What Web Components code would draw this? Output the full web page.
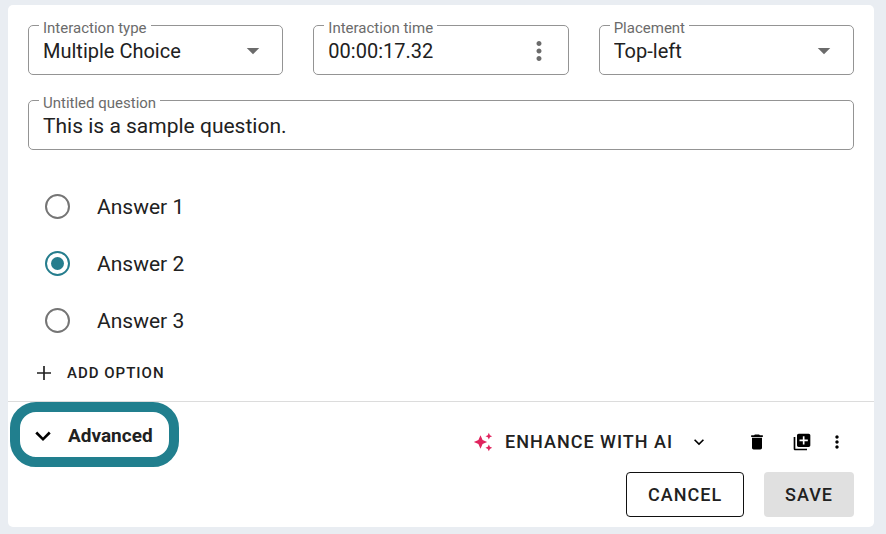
<!DOCTYPE html>
<html lang="en">
<head>
<meta charset="utf-8">
<meta name="viewport" content="width=device-width, initial-scale=1">
<title>Question editor</title>
<style>
  body {
    margin: 0;
    padding: 5px 12px 7px 8px;
    background: #e9edf2;
    color: #212121;
    font-family: Roboto, "Liberation Sans", sans-serif;
    font-size: 20px;
    --line: #949494;
    --muted: #6b6b6b;
    --accent: #257d8d;
  }
</style>
</head>
<body>
<question-editor></question-editor>

<script>
const ICONS = {
  more: '<path d="M12 8c1.1 0 2-.9 2-2s-.9-2-2-2-2 .9-2 2 .9 2 2 2zm0 2c-1.1 0-2 .9-2 2s.9 2 2 2 2-.9 2-2-.9-2-2-2zm0 6c-1.1 0-2 .9-2 2s.9 2 2 2 2-.9 2-2-.9-2-2-2z"/>',
  plus: '<path d="M11 3.6h2V11h7.4v2H13v7.4h-2V13H3.6v-2H11z"/>',
  chevron: '<path d="M7.41 8.59 12 13.17l4.59-4.58L18 10l-6 6-6-6z"/>',
  toggle: '<path d="M6.2 7.6 12 13.4l5.8-5.8 1.9 1.9-7.7 7.6-7.7-7.6z"/>',
  caret: '<path d="M7 9.5l5 5 5-5z"/>',
  trash: '<path d="M6 19c0 1.1.9 2 2 2h8c1.1 0 2-.9 2-2V7H6v12zM19 4h-3.5l-1-1h-5l-1 1H5v2h14V4z"/>',
  duplicate: '<path d="M4 6H2v14c0 1.1.9 2 2 2h14v-2H4V6zm16-4H8c-1.1 0-2 .9-2 2v12c0 1.1.9 2 2 2h12c1.1 0 2-.9 2-2V4c0-1.1-.9-2-2-2zm-1 9h-4v4h-2v-4H9V9h4V5h2v4h4v2z"/>',
  sparkle: '<path d="M19 9l1.25-2.75L23 5l-2.75-1.25L19 1l-1.25 2.75L15 5l2.75 1.25L19 9zm-7.5.5L9 4 6.5 9.5 1 12l5.5 2.5L9 20l2.5-5.5L17 12l-5.5-2.5zM19 15l-1.25 2.75L15 19l2.75 1.25L19 23l1.25-2.75L23 19l-2.75-1.25L19 15z"/>'
};

function render(el, html) {
  const t = document.createElement('template');
  t.innerHTML = html;
  el.attachShadow({ mode: 'open' }).append(t.content.cloneNode(true));
}

customElements.define('ui-icon', class extends HTMLElement {
  connectedCallback() {
    if (this.shadowRoot) return;
    render(this, `<style>
      :host { display: inline-flex; flex: none; width: 20px; height: 20px; }
      svg { width: 100%; height: 100%; fill: currentColor; }
    </style><svg viewBox="0 0 24 24" aria-hidden="true">${ICONS[this.getAttribute('name')]}</svg>`);
  }
});

customElements.define('outlined-field', class extends HTMLElement {
  connectedCallback() {
    if (this.shadowRoot) return;
    const kind = this.getAttribute('kind');
    const value = this.getAttribute('value');
    const control = kind === 'select'
      ? `<select id="control"><option>${value}</option></select><ui-icon class="caret" name="caret"></ui-icon>`
      : `<input id="control" type="text" value="${value}">` +
        (kind === 'time' ? '<button type="button" aria-label="Time options"><ui-icon name="more"></ui-icon></button>' : '');
    render(this, `<style>
      :host { display: block; min-width: 0; }
      :host([kind="text"]) { font-size: 21px; }
      fieldset { margin: 0; min-width: 0; padding: 0 14px 7px; border: 1px solid var(--line); border-radius: 5px; }
      legend { margin-left: -4px; padding: 6px 4px 0; font-size: 15px; line-height: 14px; color: var(--muted); }
      .row { display: grid; grid-template-columns: 1fr auto; align-items: center; height: 32px; }
      select, input { grid-area: 1 / 1; width: 100%; min-width: 0; height: 32px; padding: 0; border: 0; outline: 0; background: none; color: inherit; font: inherit; appearance: none; }
      select { grid-column: 1 / 3; }
      .caret { grid-area: 1 / 2; width: 30px; height: 30px; color: var(--muted); pointer-events: none; }
      button { display: flex; padding: 0; border: 0; background: none; color: var(--muted); }
      button ui-icon { width: 30px; height: 30px; }
    </style>
    <fieldset><legend><label for="control">${this.getAttribute('label')}</label></legend><div class="row">${control}</div></fieldset>`);
  }
});

customElements.define('answer-list', class extends HTMLElement {
  connectedCallback() {
    if (this.shadowRoot) return;
    const picked = this.getAttribute('picked');
    const rows = this.getAttribute('answers').split(',').map((a) =>
      `<label><input type="radio" name="answer"${a === picked ? ' checked' : ''}><span>${a}</span></label>`).join('');
    render(this, `<style>
      :host { display: block; font-size: 21px; }
      label { display: flex; align-items: center; gap: 27px; height: 57px; padding-left: 17px; }
      input { appearance: none; flex: none; display: grid; place-items: center; width: 25px; height: 25px; margin: 0; border: 2px solid #757575; border-radius: 50%; }
      input:checked { border-color: var(--accent); }
      input:checked::after { content: ""; width: 13px; height: 13px; border-radius: 50%; background: var(--accent); }
    </style>${rows}`);
  }
});

customElements.define('action-button', class extends HTMLElement {
  connectedCallback() {
    if (this.shadowRoot) return;
    const label = this.getAttribute('label');
    render(this, `<style>
      :host { display: inline-flex; }
      button { display: flex; align-items: center; justify-content: center; gap: 12px; padding: 0; border: 0; border-radius: 4px; background: none; color: inherit; font: 500 18px/24px Roboto, "Liberation Sans", sans-serif; letter-spacing: var(--tracking, 0); }
      :host([kind="outlined"]) button { height: 45px; padding: 0 21px; border: 1px solid #111; background: #fff; }
      :host([kind="filled"]) button { height: 45px; padding: 0 21px; background: #e0e0e0; }
      :host([kind="add"]) button { height: 48px; gap: 13px; padding-left: 6px; font-size: 15px; }
      :host([kind="icon"]) button { width: 35px; height: 35px; color: #000; }
    </style>
    <button type="button"${label ? ` aria-label="${label}"` : ''}><slot></slot></button>`);
  }
});

customElements.define('advanced-toggle', class extends HTMLElement {
  connectedCallback() {
    if (this.shadowRoot) return;
    render(this, `<style>
      :host { display: block; }
      button { display: flex; align-items: center; gap: 13px; height: 65px; padding: 3px 16px 0 11px; border: 10px solid #217f8e; border-radius: 26px; background: #fff; color: inherit; font: 700 19px/24px Roboto, "Liberation Sans", sans-serif; }
      ui-icon { width: 24px; height: 24px; color: #000; }
    </style>
    <button type="button" aria-expanded="false"><ui-icon name="toggle"></ui-icon><span><slot></slot></span></button>`);
  }
});

customElements.define('question-editor', class extends HTMLElement {
  connectedCallback() {
    if (this.shadowRoot) return;
    render(this, `<style>
      :host { display: block; background: #fff; border-radius: 5px; --tracking: 1px; }
      .form { padding: 10px 20px 4px; }
      .settings { display: grid; grid-template-columns: repeat(3, 1fr); gap: 30px; margin-bottom: 15px; }
      answer-list { margin: 28px 0 0; }
      .add { display: flex; }
      footer { display: flex; justify-content: space-between; align-items: flex-start; padding: 0 20px 10px 2px; border-top: 1px solid #dcdcdc; }
      .right { display: flex; flex-direction: column; align-items: flex-end; }
      .tools { display: flex; align-items: center; height: 60px; padding-top: 10px; }
      .tools .ai { margin-right: 30px; }
      .ai .spark { color: #e0245e; }
      .ai .open { margin-left: 4px; color: #000; }
      .tools .del { margin-right: 10px; }
      .final { display: flex; gap: 20px; }
    </style>
    <div class="form">
      <div class="settings">
        <outlined-field kind="select" label="Interaction type" value="Multiple Choice"></outlined-field>
        <outlined-field kind="time" label="Interaction time" value="00:00:17.32"></outlined-field>
        <outlined-field kind="select" label="Placement" value="Top-left"></outlined-field>
      </div>
      <outlined-field kind="text" label="Untitled question" value="This is a sample question."></outlined-field>
      <answer-list answers="Answer 1,Answer 2,Answer 3" picked="Answer 2"></answer-list>
      <div class="add"><action-button kind="add"><ui-icon name="plus"></ui-icon>ADD OPTION</action-button></div>
    </div>
    <footer>
      <advanced-toggle>Advanced</advanced-toggle>
      <div class="right">
        <div class="tools">
          <action-button class="ai"><ui-icon class="spark" name="sparkle"></ui-icon>ENHANCE WITH AI<ui-icon class="open" name="chevron"></ui-icon></action-button>
          <action-button class="del" kind="icon" label="Delete"><ui-icon name="trash"></ui-icon></action-button>
          <action-button kind="icon" label="Duplicate"><ui-icon name="duplicate"></ui-icon></action-button>
          <action-button kind="icon" label="More"><ui-icon name="more"></ui-icon></action-button>
        </div>
        <div class="final">
          <action-button kind="outlined">CANCEL</action-button>
          <action-button kind="filled">SAVE</action-button>
        </div>
      </div>
    </footer>`);
  }
});
</script>
</body>
</html>
